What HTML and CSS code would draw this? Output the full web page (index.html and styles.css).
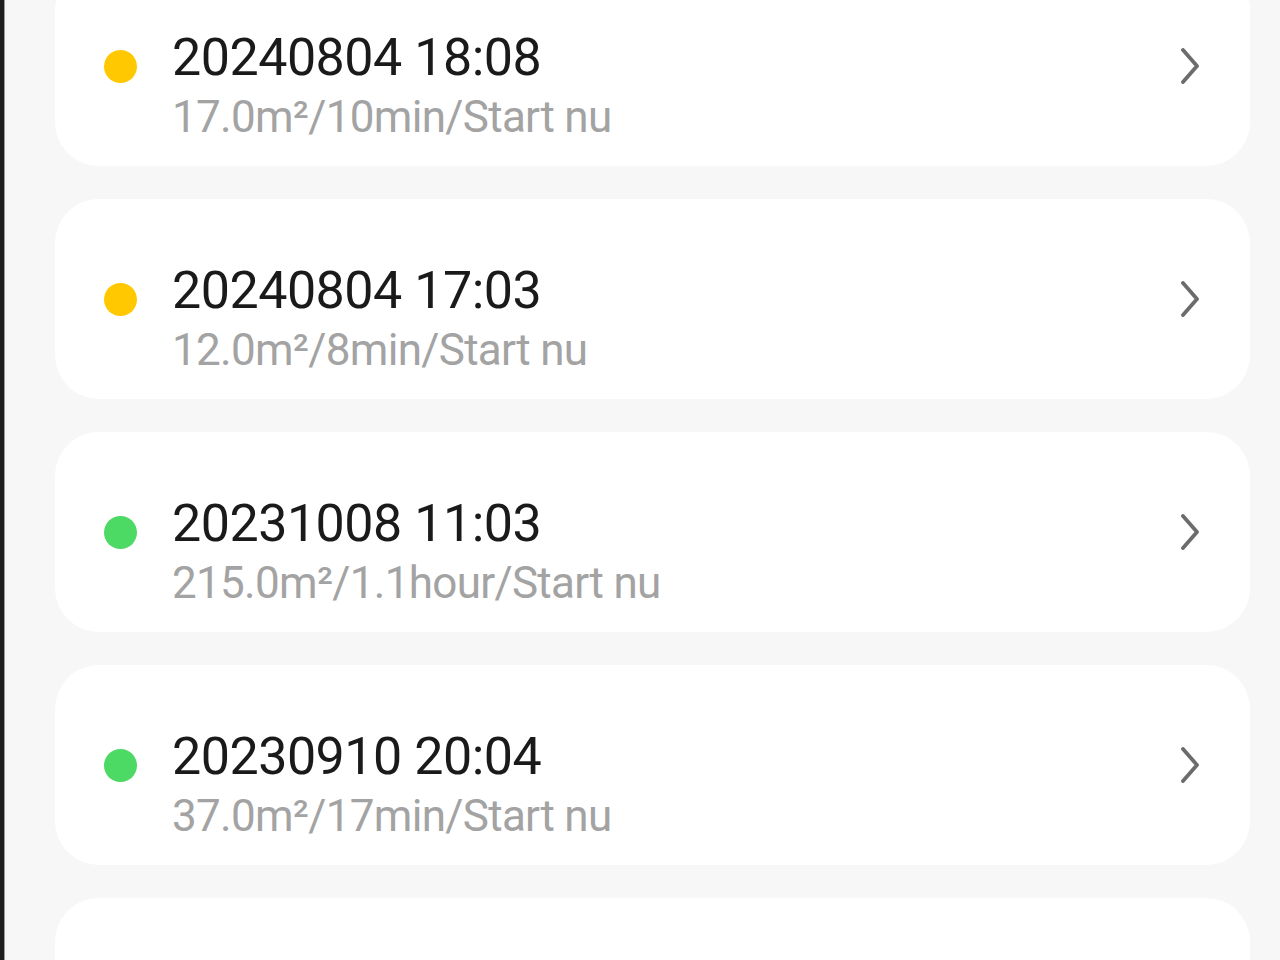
FILE: index.html
```html
<!DOCTYPE html>
<html>
<head>
<meta charset="utf-8">
<link rel="stylesheet" href="styles.css">
</head>
<body>
<div class="frame">
  <div class="edge"></div>
  <div class="list">
    <div class="card">
      <span class="dot yellow"></span>
      <div class="info">
        <div class="title">20240804 18:08</div>
        <div class="sub">17.0m²/10min/Start nu</div>
      </div>
      <svg class="chev" viewBox="0 0 20 36" width="20" height="36"><path d="M3 2 L17 18 L3 34" fill="none" stroke="#6c6c6c" stroke-width="3.8" stroke-linecap="round" stroke-linejoin="round"/></svg>
    </div>
    <div class="card">
      <span class="dot yellow"></span>
      <div class="info">
        <div class="title">20240804 17:03</div>
        <div class="sub">12.0m²/8min/Start nu</div>
      </div>
      <svg class="chev" viewBox="0 0 20 36" width="20" height="36"><path d="M3 2 L17 18 L3 34" fill="none" stroke="#6c6c6c" stroke-width="3.8" stroke-linecap="round" stroke-linejoin="round"/></svg>
    </div>
    <div class="card">
      <span class="dot green"></span>
      <div class="info">
        <div class="title">20231008 11:03</div>
        <div class="sub">215.0m²/1.1hour/Start nu</div>
      </div>
      <svg class="chev" viewBox="0 0 20 36" width="20" height="36"><path d="M3 2 L17 18 L3 34" fill="none" stroke="#6c6c6c" stroke-width="3.8" stroke-linecap="round" stroke-linejoin="round"/></svg>
    </div>
    <div class="card">
      <span class="dot green"></span>
      <div class="info">
        <div class="title">20230910 20:04</div>
        <div class="sub">37.0m²/17min/Start nu</div>
      </div>
      <svg class="chev" viewBox="0 0 20 36" width="20" height="36"><path d="M3 2 L17 18 L3 34" fill="none" stroke="#6c6c6c" stroke-width="3.8" stroke-linecap="round" stroke-linejoin="round"/></svg>
    </div>
    <div class="card"></div>
  </div>
</div>
</body>
</html>
```
FILE: styles.css
```css
html, body {
  margin: 0;
  padding: 0;
  background: #f7f7f7;
  overflow: hidden;
}
.frame {
  display: flex;
  height: 960px;
  overflow: hidden;
}
.edge {
  width: 4px;
  flex: none;
  background: #1e1e1e;
  border-right: 1px solid #9a9a9a;
}
.list {
  flex: 1;
  display: flex;
  flex-direction: column;
  gap: 33px;
  margin-top: -34px;
  padding: 0 30px 0 50px;
}
.card {
  flex: none;
  height: 200px;
  background: #ffffff;
  border-radius: 44px;
  display: flex;
  align-items: center;
  padding: 0 50px 0 49px;
}
.dot {
  width: 33px;
  height: 33px;
  border-radius: 50%;
  flex: none;
}
.yellow { background: #ffc800; }
.green { background: #4cd964; }
.info {
  flex: 1;
  margin-left: 35px;
  padding-top: 42px;
  font-family: Roboto, "Liberation Sans", sans-serif;
}
.title {
  font-size: 52px;
  line-height: 60px;
  color: #1a1a1a;
  letter-spacing: -0.5px;
}
.sub {
  font-size: 44px;
  line-height: 58px;
  color: #a3a3a3;
  letter-spacing: -0.7px;
}
.chev {
  flex: none;
}
```
